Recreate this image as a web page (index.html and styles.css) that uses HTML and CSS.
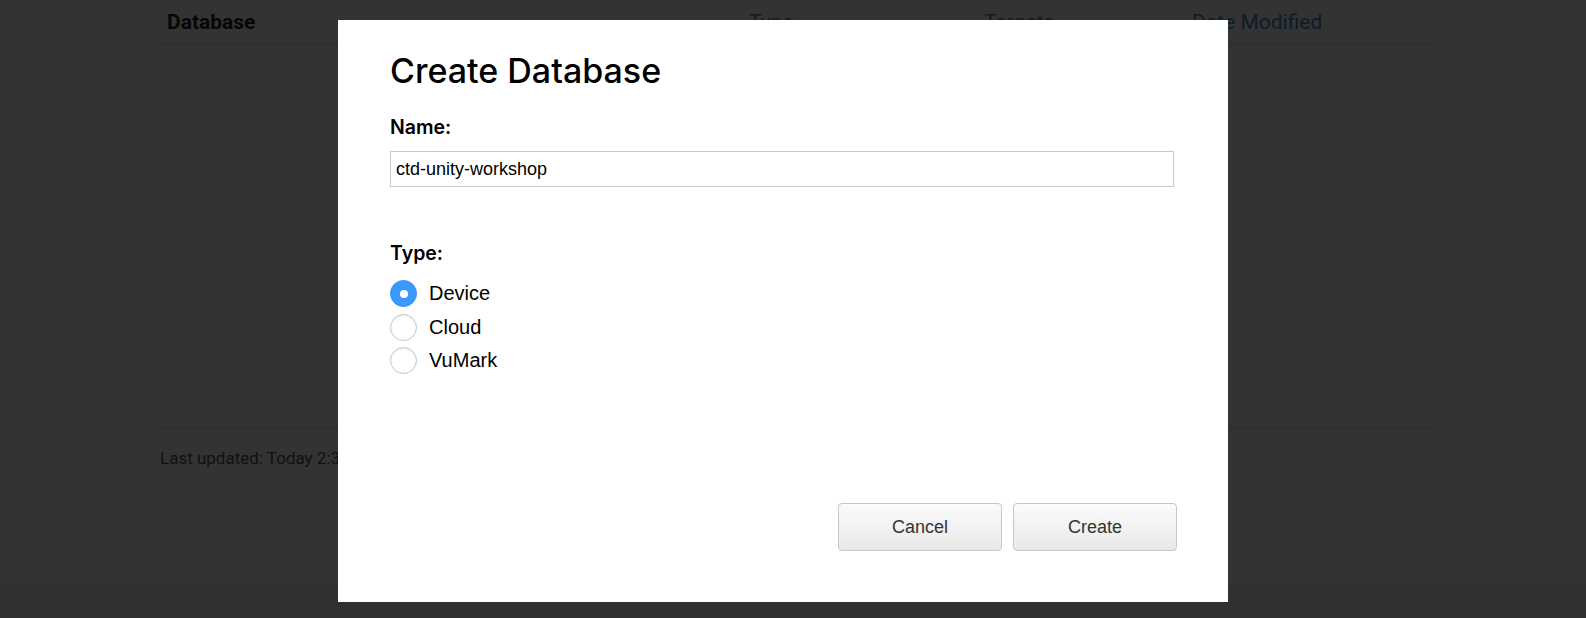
FILE: index.html
```html
<!DOCTYPE html>
<html lang="en">
<head>
<meta charset="utf-8">
<title>Create Database</title>
<link rel="stylesheet" href="styles.css">
</head>
<body>
<div class="page">
  <div class="container">
    <div class="table-head">
      <div class="col col-db">Database</div>
      <div class="col col-type link">Type</div>
      <div class="col col-targets link">Targets</div>
      <div class="col col-date link">Date Modified</div>
    </div>
    <div class="table-body"></div>
    <div class="updated">Last updated: Today 2:34 PM</div>
  </div>
  <div class="footer"></div>
</div>

<div class="overlay"></div>

<div class="modal">
  <h1 class="modal-title">Create Database</h1>
  <div class="field">
    <label class="field-label" for="dbname">Name:</label>
    <input class="text-input" id="dbname" type="text" value="ctd-unity-workshop">
  </div>
  <div class="field field-type">
    <div class="field-label">Type:</div>
    <div class="radios">
      <label class="radio-row"><span class="radio checked"></span><span class="radio-text">Device</span></label>
      <label class="radio-row"><span class="radio"></span><span class="radio-text">Cloud</span></label>
      <label class="radio-row"><span class="radio"></span><span class="radio-text">VuMark</span></label>
    </div>
  </div>
  <div class="actions">
    <button class="btn">Cancel</button>
    <button class="btn">Create</button>
  </div>
</div>
</body>
</html>
```
FILE: styles.css
```css
html, body {
  margin: 0;
  padding: 0;
}
body {
  font-family: Roboto, "Liberation Sans", Arial, sans-serif;
  background: #f0f0f0;
  width: 1586px;
  height: 618px;
  overflow: hidden;
}
.page {
  display: flex;
  flex-direction: column;
  height: 618px;
}
.container {
  background: #fff;
  height: 585px;
  padding: 0 156px 0 159px;
  box-sizing: border-box;
}
.table-head {
  display: grid;
  grid-template-columns: 582px 235px 208px 246px;
  height: 44px;
  border-bottom: 1px solid #d6d6d6;
  box-sizing: border-box;
}
.col {
  padding: 10px 8px 0;
  font-size: 21px;
  line-height: 25px;
  font-weight: bold;
  color: #222;
}
.col.link {
  font-weight: normal;
  color: #3a8ad8;
}
.table-body {
  height: 383px;
  border-bottom: 1px solid #d6d6d6;
}
.updated {
  padding-top: 18px;
  padding-left: 1px;
  font-size: 17px;
  line-height: 24px;
  color: #555;
}
.footer {
  flex: 1;
  background: #f0f0f0;
}
.overlay {
  position: fixed;
  inset: 0;
  background: rgba(0, 0, 0, 0.8);
}
.modal {
  position: absolute;
  left: 338px;
  top: 20px;
  width: 890px;
  height: 582px;
  background: #fff;
  box-sizing: border-box;
  padding: 31px 54px 0 52px;
  display: flex;
  flex-direction: column;
}
.modal-title {
  margin: 0;
  font-family: "Inter", "Open Sans", sans-serif;
  font-weight: 500;
  font-size: 34px;
  line-height: 40px;
  color: #000;
}
.field {
  display: flex;
  flex-direction: column;
}
.field-label {
  margin-top: 25px;
  font-family: "Inter", sans-serif;
  font-weight: 600;
  font-size: 19.5px;
  line-height: 22px;
  color: #000;
}
.text-input {
  margin-top: 13px;
  width: 784px;
  height: 36px;
  box-sizing: border-box;
  border: 1px solid #c9c9c9;
  padding: 0 5px;
  font-family: "Liberation Sans", Arial, sans-serif;
  font-size: 18px;
  color: #000;
  outline: none;
}
.field-type .field-label {
  margin-top: 55px;
}
.radios {
  margin-top: 16px;
  display: flex;
  flex-direction: column;
  gap: 6.5px;
}
.radio-row {
  display: flex;
  align-items: center;
  gap: 12px;
  height: 27px;
}
.radio {
  flex: none;
  width: 27px;
  height: 27px;
  box-sizing: border-box;
  border-radius: 50%;
  border: 1px solid #c4c4c4;
  background: #fff;
  box-shadow: inset 0 1px 2px rgba(0, 0, 0, 0.08);
  position: relative;
}
.radio.checked {
  border-color: #3390f5;
  background: #3b99fc;
  box-shadow: none;
}
.radio.checked::after {
  content: "";
  position: absolute;
  left: 50%;
  top: 50%;
  width: 8px;
  height: 8px;
  margin: -4px 0 0 -4px;
  border-radius: 50%;
  background: #fff;
}
.radio-text {
  font-family: "Liberation Sans", Arial, sans-serif;
  font-size: 20px;
  color: #000;
}
.actions {
  margin-top: auto;
  margin-bottom: 51px;
  margin-right: -3px;
  display: flex;
  justify-content: flex-end;
  gap: 11px;
}
.btn {
  width: 164px;
  height: 48px;
  border: 1px solid #c6c6c6;
  border-radius: 4px;
  background: linear-gradient(#fbfbfb, #e9e9e9);
  font-family: "Liberation Sans", Arial, sans-serif;
  font-size: 18px;
  color: #333;
}
```
